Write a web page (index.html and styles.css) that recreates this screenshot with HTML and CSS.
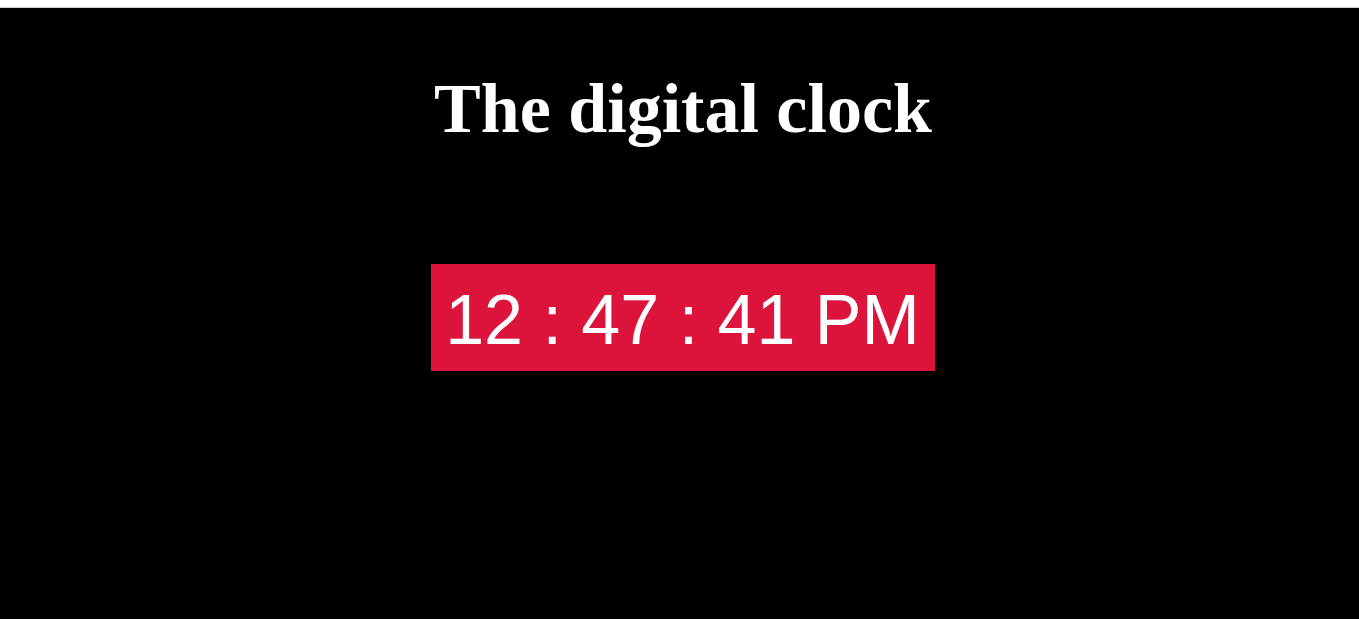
FILE: index.html
```html
<!DOCTYPE html>
<html>
<head>
<meta charset="utf-8">
<title>Digital Clock</title>
<link rel="stylesheet" href="styles.css">
</head>
<body>
<main class="page">
  <h1 class="title">The digital clock</h1>
  <div class="clock-wrap">
    <div class="clock">12 : 47 : 41 PM</div>
  </div>
</main>
</body>
</html>
```
FILE: styles.css
```css
html, body {
  margin: 0;
  padding: 0;
  background: #fff;
}
.page {
  margin-top: 7px;
  border-top: 1px solid #cfcfcf;
  background: #000;
  height: 612px;
  box-sizing: border-box;
  padding-left: 7px;
  padding-top: 61px;
  display: flex;
  flex-direction: column;
  align-items: center;
}
.title {
  margin: 0;
  font-family: "Liberation Serif", "Times New Roman", serif;
  font-weight: bold;
  font-size: 70px;
  line-height: normal;
  color: #fff;
}
.clock-wrap {
  margin-top: 115px;
}
.clock {
  background: #dc143c;
  color: #fff;
  font-family: "Liberation Sans", Arial, sans-serif;
  font-size: 70px;
  line-height: normal;
  padding: 16px 15px 11px 14px;
}
```
